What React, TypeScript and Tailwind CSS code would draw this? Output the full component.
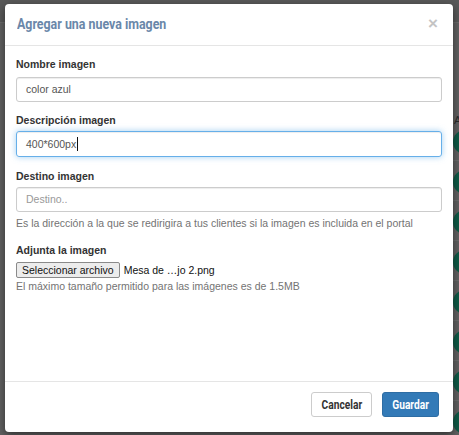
import React from "react";

const arial = { fontFamily: '"Liberation Sans", Arial, sans-serif' };
const roboto = { fontFamily: 'Roboto, "Liberation Sans", sans-serif' };

export default function App() {
  const circles = [142, 182, 222, 262, 302, 342, 382, 422];
  return (
    <div className="relative w-[459px] h-[435px] overflow-hidden bg-[#616161]" style={arial}>
      {/* dimmed page behind */}
      <div className="absolute left-0 top-0 w-full h-[23px] bg-[#595959] border-b border-[#6b6b6b]" />
      <div className="absolute left-[454px] top-[112px] text-[11px] text-[#2a2a2a]">Ac</div>
      {circles.map((y) => (
        <div
          key={y}
          className="absolute left-[453px] w-[24px] h-[24px] rounded-full bg-[#0f5a46]"
          style={{ top: y - 12 }}
        />
      ))}
      {circles.map((y) => (
        <div key={"l" + y} className="absolute left-[453px] w-[10px] h-px bg-[#6d6d6d]" style={{ top: y + 18 }} />
      ))}

      <div className="relative ml-[5px] mt-[4px] w-[448px] h-[428px] bg-white rounded-[4px] shadow-[0_3px_9px_rgba(0,0,0,0.5)] flex flex-col">
        {/* header */}
        <div className="h-[42px] border-b border-[#e5e5e5] flex items-center justify-between pl-[12px] pr-[15px] shrink-0">
          <div
            className="inline-block origin-left scale-x-[0.8] whitespace-nowrap text-[15.5px] font-bold text-[#6a87a9] pt-[1px]"
            style={roboto}
          >
            Agregar una nueva imagen
          </div>
          <div className="text-[17px] font-bold text-[#c4c4c4] leading-none -mt-[3px]" style={arial}>×</div>
        </div>

        {/* body */}
        <div className="flex-1 px-[11px] pt-[11px] text-[10.5px] leading-[15px] text-[#333]">
          <div className="font-bold">Nombre imagen</div>
          <div className="mt-[5px] h-[25px] border border-[#ccc] rounded-[3px] px-[9px] flex items-center text-[#555] shadow-[inset_0_1px_1px_rgba(0,0,0,0.075)]">
            color azul
          </div>

          <div className="mt-[11px] font-bold">Descripción imagen</div>
          <div className="mt-[3px] h-[26px] border border-[#66afe9] rounded-[3px] px-[9px] flex items-center text-[#555] shadow-[inset_0_1px_1px_rgba(0,0,0,0.075),0_0_6px_rgba(102,175,233,0.6)]">
            400*600px
            <span className="inline-block w-px h-[14px] bg-[#111] ml-[1px]" />
          </div>

          <div className="mt-[12px] font-bold">Destino imagen</div>
          <div className="mt-[3px] h-[25px] border border-[#ccc] rounded-[3px] px-[9px] flex items-center text-[#999] shadow-[inset_0_1px_1px_rgba(0,0,0,0.075)]">
            Destino..
          </div>
          <div className="mt-[4px] text-[#737373]">
            Es la dirección a la que se redirigira a tus clientes si la imagen es incluida en el portal
          </div>

          <div className="mt-[12px] font-bold">Adjunta la imagen</div>
          <div className="mt-[4px] flex items-center h-[16px]">
            <div className="h-[16px] px-[5px] border border-[#8a8a8a] rounded-[2px] bg-[#ececec] text-[#111] flex items-center leading-none text-[10.5px]">
              Seleccionar archivo
            </div>
            <span className="ml-[4px] text-[#111] text-[10.5px]">Mesa de …jo 2.png</span>
          </div>
          <div className="mt-[1px] text-[#737373]">El máximo tamaño permitido para las imágenes es de 1.5MB</div>
        </div>

        {/* footer */}
        <div className="h-[51px] border-t border-[#e5e5e5] flex items-start justify-end gap-[10px] pt-[10px] pr-[14px] shrink-0">
          <div className="h-[25px] w-[61px] border border-[#ccc] rounded-[3px] bg-white text-[#333] text-[12px] font-bold flex items-center justify-center">
            <span className="inline-block scale-x-[0.85] whitespace-nowrap" style={roboto}>
              Cancelar
            </span>
          </div>
          <div className="h-[25px] w-[57px] border border-[#2e6da4] rounded-[3px] bg-[#337ab7] text-white text-[12px] font-bold flex items-center justify-center">
            <span className="inline-block scale-x-[0.85] whitespace-nowrap" style={roboto}>
              Guardar
            </span>
          </div>
        </div>
      </div>
    </div>
  );
}
